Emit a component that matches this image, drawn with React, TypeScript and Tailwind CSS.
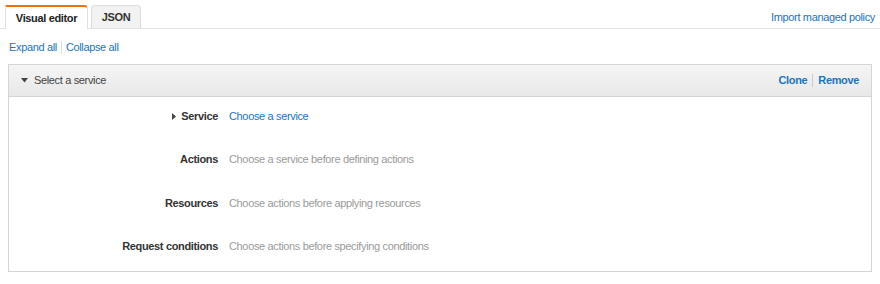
import React from 'react';

const rows = [
  { label: 'Service', value: 'Choose a service', link: true, caret: true },
  { label: 'Actions', value: 'Choose a service before defining actions' },
  { label: 'Resources', value: 'Choose actions before applying resources' },
  { label: 'Request conditions', value: 'Choose actions before specifying conditions' },
];

const App = () => {
  return (
    <div className="w-[880px] h-[284px] bg-white text-[11px] tracking-[-0.35px] text-[#444] font-['Liberation_Sans',Arial,sans-serif]">
      {/* tabs */}
      <div className="flex items-end justify-between border-b border-[#e5e5e5] pl-[5px] pr-[5px] h-[29px]">
        <div className="flex items-end gap-[3px]">
          <div className="h-[24px] w-[83px] flex items-center justify-center bg-white border-t-2 border-t-[#ec7211] border-x border-x-[#e0e0e0] rounded-tr-[4px] font-bold text-[#222] -mb-px">
            Visual editor
          </div>
          <div className="h-[23px] w-[50px] flex items-center justify-center bg-[#f2f2f2] border border-b-0 border-[#dcdcdc] rounded-t-[4px] font-bold text-[#333]">
            JSON
          </div>
        </div>
        <a className="text-[#1a73c0] self-start mt-[9px]">Import managed policy</a>
      </div>

      {/* expand / collapse */}
      <div className="flex items-center pl-[9px] mt-[12px] h-[13px] text-[#1a73c0]">
        <span>Expand all</span>
        <span className="mx-[4px] h-[13px] border-l border-[#ddd]" />
        <span>Collapse all</span>
      </div>

      {/* panel */}
      <div className="ml-[8px] w-[864px] mt-[10px] border border-[#d5d5d5]">
        <div className="h-[32px] flex items-center justify-between pl-[12px] pr-[12px] bg-gradient-to-b from-[#f5f5f5] to-[#e8e8e8] border-b border-[#d5d5d5]">
          <div className="flex items-center gap-[6px]">
            <svg width="7" height="5" viewBox="0 0 7 5"><path d="M0 0 L7 0 L3.5 4.5 Z" fill="#444" /></svg>
            <span className="text-[#444]">Select a service</span>
          </div>
          <div className="flex items-center font-bold text-[#1a73c0]">
            <span>Clone</span>
            <span className="mx-[5px] h-[13px] border-l border-[#ccc]" />
            <span>Remove</span>
          </div>
        </div>
        <div className="pt-[12px] pb-[17px]">
          {rows.map((r, i) => (
            <div key={r.label} className={`flex items-center h-[14px] ${i > 0 ? 'mt-[29.5px]' : ''}`}>
              <div className="w-[209px] flex items-center justify-end gap-[5px] font-bold text-[#333]">
                {r.caret && (
                  <svg width="4" height="7" viewBox="0 0 4 7"><path d="M0 0 L4 3.5 L0 7 Z" fill="#444" /></svg>
                )}
                <span>{r.label}</span>
              </div>
              <div className={`ml-[11px] ${r.link ? 'text-[#1a73c0]' : 'text-[#9a9a9a]'}`}>{r.value}</div>
            </div>
          ))}
        </div>
      </div>
    </div>
  );
};

export default App;
